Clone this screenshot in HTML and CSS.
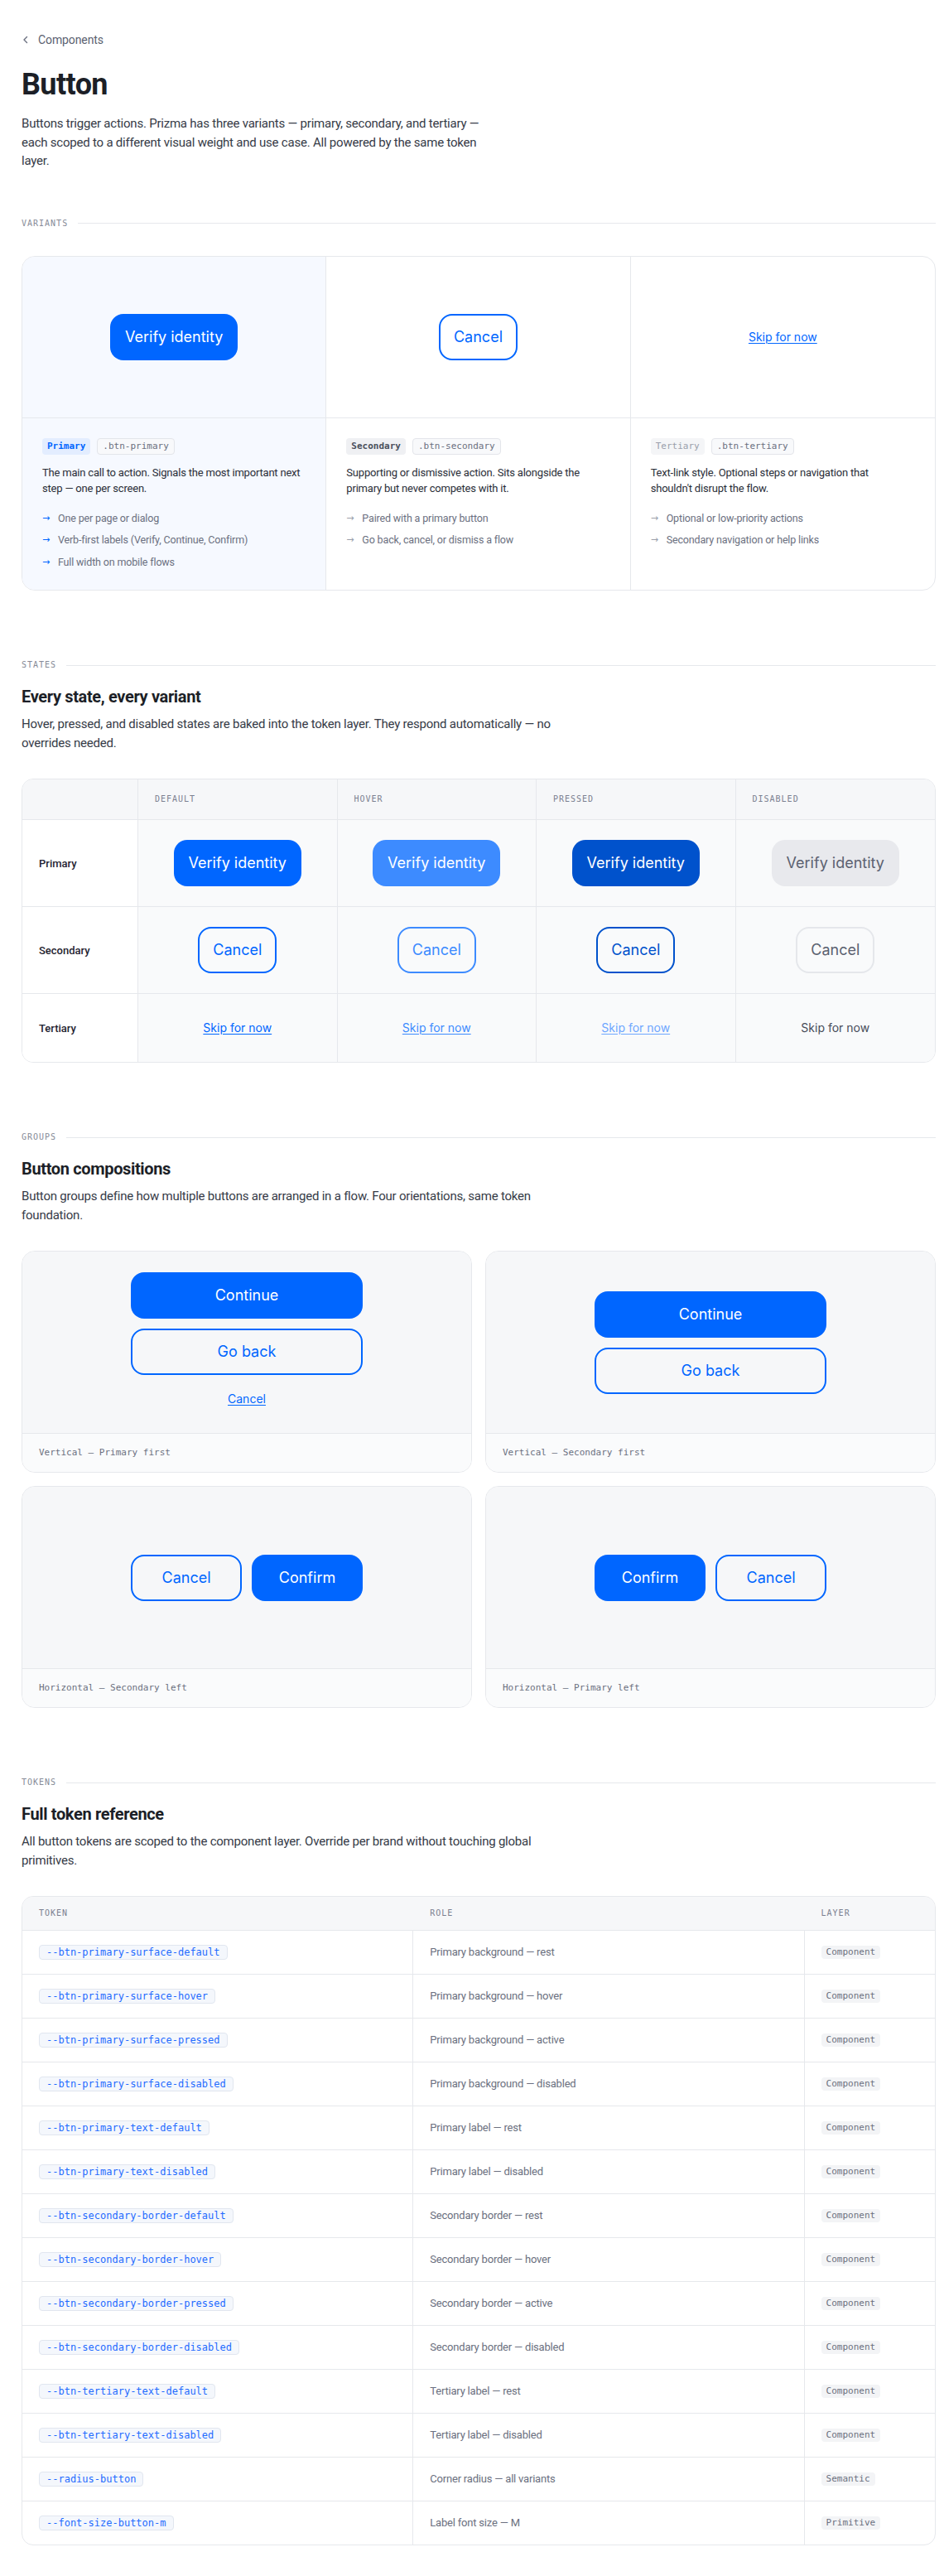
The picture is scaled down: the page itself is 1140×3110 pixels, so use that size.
FILE: index.html
```html
<!DOCTYPE html>
<html lang="en">
<head>
<meta charset="utf-8">
<title>Button — Components</title>
<link rel="stylesheet" href="styles.css">
</head>
<body>
<div class="page">
  <a class="crumb" href="#">
    <svg class="chev" width="10" height="10" viewBox="0 0 10 10"><path d="M6.5 1.5 3 5l3.5 3.5" fill="none" stroke="currentColor" stroke-width="1.4" stroke-linecap="round" stroke-linejoin="round"/></svg>
    <span>Components</span>
  </a>
  <h1 class="title">Button</h1>
  <p class="intro">Buttons trigger actions. Prizma has three variants — primary, secondary, and tertiary —<br>each scoped to a different visual weight and use case. All powered by the same token<br>layer.</p>

  <section class="section first">
    <div class="sec-label">Variants</div>
    <div class="vcard">
      <div class="vcol primary">
        <div class="vprev"><span class="btn btn-primary">Verify identity</span></div>
        <div class="vinfo">
          <div class="tags"><span class="tag t-primary">Primary</span><span class="tag cls">.btn-primary</span></div>
          <p class="vdesc">The main call to action. Signals the most important next<br>step — one per screen.</p>
          <ul class="vlist">
            <li><span class="arr blue">→</span>One per page or dialog</li>
            <li><span class="arr blue">→</span>Verb-first labels (Verify, Continue, Confirm)</li>
            <li><span class="arr blue">→</span>Full width on mobile flows</li>
          </ul>
        </div>
      </div>
      <div class="vcol">
        <div class="vprev"><span class="btn btn-secondary">Cancel</span></div>
        <div class="vinfo">
          <div class="tags"><span class="tag t-secondary">Secondary</span><span class="tag cls">.btn-secondary</span></div>
          <p class="vdesc">Supporting or dismissive action. Sits alongside the<br>primary but never competes with it.</p>
          <ul class="vlist">
            <li><span class="arr">→</span>Paired with a primary button</li>
            <li><span class="arr">→</span>Go back, cancel, or dismiss a flow</li>
          </ul>
        </div>
      </div>
      <div class="vcol">
        <div class="vprev"><span class="link">Skip for now</span></div>
        <div class="vinfo">
          <div class="tags"><span class="tag t-tertiary">Tertiary</span><span class="tag cls">.btn-tertiary</span></div>
          <p class="vdesc">Text-link style. Optional steps or navigation that<br>shouldn't disrupt the flow.</p>
          <ul class="vlist">
            <li><span class="arr">→</span>Optional or low-priority actions</li>
            <li><span class="arr">→</span>Secondary navigation or help links</li>
          </ul>
        </div>
      </div>
    </div>
  </section>

  <section class="section">
    <div class="sec-label">States</div>
    <h2 class="sec-title">Every state, every variant</h2>
    <p class="sec-desc">Hover, pressed, and disabled states are baked into the token layer. They respond automatically — no<br>overrides needed.</p>
    <div class="stable">
      <div class="sh"></div>
      <div class="sh">Default</div>
      <div class="sh">Hover</div>
      <div class="sh">Pressed</div>
      <div class="sh">Disabled</div>

      <div class="sl">Primary</div>
      <div class="sc"><span class="btn btn-primary">Verify identity</span></div>
      <div class="sc"><span class="btn btn-primary hover">Verify identity</span></div>
      <div class="sc"><span class="btn btn-primary pressed">Verify identity</span></div>
      <div class="sc"><span class="btn btn-primary disabled">Verify identity</span></div>

      <div class="sl">Secondary</div>
      <div class="sc"><span class="btn btn-secondary">Cancel</span></div>
      <div class="sc"><span class="btn btn-secondary hover">Cancel</span></div>
      <div class="sc"><span class="btn btn-secondary pressed">Cancel</span></div>
      <div class="sc"><span class="btn btn-secondary disabled">Cancel</span></div>

      <div class="sl last">Tertiary</div>
      <div class="sc last"><span class="link">Skip for now</span></div>
      <div class="sc last"><span class="link hover">Skip for now</span></div>
      <div class="sc last"><span class="link pressed">Skip for now</span></div>
      <div class="sc last"><span class="link disabled">Skip for now</span></div>
    </div>
  </section>

  <section class="section">
    <div class="sec-label">Groups</div>
    <h2 class="sec-title">Button compositions</h2>
    <p class="sec-desc">Button groups define how multiple buttons are arranged in a flow. Four orientations, same token<br>foundation.</p>
    <div class="ggrid">
      <div class="gcard">
        <div class="gprev">
          <div class="stack">
            <span class="btn btn-primary">Continue</span>
            <span class="btn btn-secondary">Go back</span>
            <span class="link">Cancel</span>
          </div>
        </div>
        <div class="gfoot">Vertical — Primary first</div>
      </div>
      <div class="gcard">
        <div class="gprev">
          <div class="stack">
            <span class="btn btn-primary">Continue</span>
            <span class="btn btn-secondary">Go back</span>
          </div>
        </div>
        <div class="gfoot">Vertical — Secondary first</div>
      </div>
      <div class="gcard">
        <div class="gprev">
          <div class="row">
            <span class="btn btn-secondary">Cancel</span>
            <span class="btn btn-primary">Confirm</span>
          </div>
        </div>
        <div class="gfoot">Horizontal — Secondary left</div>
      </div>
      <div class="gcard">
        <div class="gprev">
          <div class="row">
            <span class="btn btn-primary">Confirm</span>
            <span class="btn btn-secondary">Cancel</span>
          </div>
        </div>
        <div class="gfoot">Horizontal — Primary left</div>
      </div>
    </div>
  </section>

  <section class="section">
    <div class="sec-label">Tokens</div>
    <h2 class="sec-title">Full token reference</h2>
    <p class="sec-desc">All button tokens are scoped to the component layer. Override per brand without touching global<br>primitives.</p>
    <div class="ttable">
      <div class="th">Token</div><div class="th">Role</div><div class="th">Layer</div>

      <div class="td"><code class="tok">--btn-primary-surface-default</code></div><div class="td role">Primary background — rest</div><div class="td layer"><span class="lay">Component</span></div>
      <div class="td"><code class="tok">--btn-primary-surface-hover</code></div><div class="td role">Primary background — hover</div><div class="td layer"><span class="lay">Component</span></div>
      <div class="td"><code class="tok">--btn-primary-surface-pressed</code></div><div class="td role">Primary background — active</div><div class="td layer"><span class="lay">Component</span></div>
      <div class="td"><code class="tok">--btn-primary-surface-disabled</code></div><div class="td role">Primary background — disabled</div><div class="td layer"><span class="lay">Component</span></div>
      <div class="td"><code class="tok">--btn-primary-text-default</code></div><div class="td role">Primary label — rest</div><div class="td layer"><span class="lay">Component</span></div>
      <div class="td"><code class="tok">--btn-primary-text-disabled</code></div><div class="td role">Primary label — disabled</div><div class="td layer"><span class="lay">Component</span></div>
      <div class="td"><code class="tok">--btn-secondary-border-default</code></div><div class="td role">Secondary border — rest</div><div class="td layer"><span class="lay">Component</span></div>
      <div class="td"><code class="tok">--btn-secondary-border-hover</code></div><div class="td role">Secondary border — hover</div><div class="td layer"><span class="lay">Component</span></div>
      <div class="td"><code class="tok">--btn-secondary-border-pressed</code></div><div class="td role">Secondary border — active</div><div class="td layer"><span class="lay">Component</span></div>
      <div class="td"><code class="tok">--btn-secondary-border-disabled</code></div><div class="td role">Secondary border — disabled</div><div class="td layer"><span class="lay">Component</span></div>
      <div class="td"><code class="tok">--btn-tertiary-text-default</code></div><div class="td role">Tertiary label — rest</div><div class="td layer"><span class="lay">Component</span></div>
      <div class="td"><code class="tok">--btn-tertiary-text-disabled</code></div><div class="td role">Tertiary label — disabled</div><div class="td layer"><span class="lay">Component</span></div>
      <div class="td"><code class="tok">--radius-button</code></div><div class="td role">Corner radius — all variants</div><div class="td layer"><span class="lay">Semantic</span></div>
      <div class="td last"><code class="tok">--font-size-button-m</code></div><div class="td role last">Label font size — M</div><div class="td layer last"><span class="lay">Primitive</span></div>
    </div>
  </section>
</div>
</body>
</html>
```

FILE: styles.css
```css
* { box-sizing: border-box; margin: 0; padding: 0; }

body {
  margin: 0;
  background: #ffffff;
  font-family: Roboto, "Noto Sans", sans-serif;
  color: #1c1f27;
}

.page {
  width: 1130px;
  padding: 38px 0 40px 26px;
}

/* Header */
.crumb {
  display: flex;
  align-items: center;
  gap: 10px;
  font-size: 14px;
  line-height: 20px;
  color: #5b6170;
  text-decoration: none;
  letter-spacing: -0.1px;
}
.chev { color: #6b7080; flex: none; }

.title {
  margin: 22px 0 14px;
  font-size: 36px;
  line-height: 44px;
  font-weight: 700;
  letter-spacing: -0.6px;
  color: #1c1f27;
}

.intro {
  max-width: 640px;
  font-size: 15px;
  line-height: 22.5px;
  color: #363b47;
  letter-spacing: -0.22px;
}

/* Sections */
.section { margin-top: 82px; }
.section.first { margin-top: 56px; }

.sec-label {
  display: flex;
  align-items: center;
  gap: 12px;
  margin-bottom: 16px;
  font-family: "DejaVu Sans Mono", "Liberation Mono", monospace;
  font-size: 10px;
  line-height: 16px;
  letter-spacing: 1px;
  text-transform: uppercase;
  color: #868b97;
}
.sec-label::after {
  content: "";
  flex: 1;
  height: 1px;
  background: #e6e8ec;
}

.sec-title {
  font-size: 20px;
  line-height: 28px;
  font-weight: 700;
  letter-spacing: -0.35px;
  color: #1c1f27;
  margin-bottom: 8px;
}

.sec-desc {
  max-width: 760px;
  font-size: 15px;
  line-height: 22.5px;
  color: #363b47;
  letter-spacing: -0.22px;
  margin-bottom: 32px;
}

/* Buttons */
.btn {
  display: inline-flex;
  align-items: center;
  justify-content: center;
  height: 56px;
  padding: 0 16px;
  border: 2px solid transparent;
  border-radius: 16px;
  font-family: Inter, Roboto, sans-serif;
  font-size: 18px;
  line-height: 24px;
  font-weight: 400;
  white-space: nowrap;
}
.btn-primary { background: #0066ff; color: #ffffff; }
.btn-primary.hover { background: #3d8bff; }
.btn-primary.pressed { background: #0052cc; }
.btn-primary.disabled { background: #e8e9ed; color: #5b6170; }

.btn-secondary { background: transparent; border-color: #0066ff; color: #0066ff; }
.btn-secondary.hover { border-color: #3d8bff; color: #3d8bff; }
.btn-secondary.pressed { border-color: #0052cc; color: #0052cc; }
.btn-secondary.disabled { border-color: #e5e7eb; color: #5b6170; }

.link {
  display: inline-block;
  padding: 8px 0;
  font-family: Inter, Roboto, sans-serif;
  font-size: 14px;
  line-height: 18px;
  color: #0066ff;
  text-decoration: underline;
  text-underline-offset: 2px;
  text-decoration-thickness: 1px;
  white-space: nowrap;
}
.link.hover { color: #3d8bff; }
.link.pressed { color: #6ea6ff; }
.link.disabled { color: #474c59; text-decoration: none; }

/* Variants card */
.vcard {
  margin-top: 31px;
  display: grid;
  grid-template-columns: repeat(3, 1fr);
  border: 1px solid #e6e8ec;
  border-radius: 16px;
  overflow: hidden;
}
.vcol {
  display: flex;
  flex-direction: column;
  border-right: 1px solid #e6e8ec;
}
.vcol:last-child { border-right: none; }
.vcol.primary { background: #f6f9ff; }

.vprev {
  height: 195px;
  display: flex;
  align-items: center;
  justify-content: center;
  border-bottom: 1px solid #e6e8ec;
}
.vinfo { padding: 24px; flex: 1; }

.tags { display: flex; gap: 8px; }
.tag {
  font-family: "DejaVu Sans Mono", "Liberation Mono", monospace;
  font-size: 11px;
  line-height: 20px;
  padding: 0 6px;
  border-radius: 4px;
}
.t-primary { background: #e3edff; color: #0066ff; font-weight: 700; }
.t-secondary { background: #eff0f3; color: #4a4f5c; font-weight: 700; }
.t-tertiary { background: #f4f5f7; color: #9a9fab; }
.tag.cls {
  background: #f8f9fb;
  border: 1px solid #e3e5ea;
  line-height: 18px;
  color: #6b7080;
}

.vdesc {
  margin-top: 12px;
  font-size: 13px;
  line-height: 19.5px;
  color: #2a2e38;
  letter-spacing: -0.2px;
}
.vlist {
  list-style: none;
  margin-top: 16px;
  display: flex;
  flex-direction: column;
  gap: 7px;
}
.vlist li {
  display: flex;
  gap: 8px;
  font-size: 12.5px;
  line-height: 19.5px;
  color: #6b7080;
  letter-spacing: -0.15px;
}
.arr {
  width: 11px;
  flex: none;
  font-family: "DejaVu Sans", sans-serif;
  font-size: 11px;
  color: #9a9fab;
}
.arr.blue { color: #0066ff; }

/* States table */
.stable {
  display: grid;
  grid-template-columns: 140px repeat(4, 1fr);
  border: 1px solid #e6e8ec;
  border-radius: 14px;
  overflow: hidden;
}
.stable > div {
  border-right: 1px solid #e6e8ec;
  border-bottom: 1px solid #e6e8ec;
}
.stable > div:nth-child(5n) { border-right: none; }
.stable > div.last { border-bottom: none; }

.sh {
  background: #f6f7f9;
  padding: 16px 20px;
  font-family: "DejaVu Sans Mono", "Liberation Mono", monospace;
  font-size: 10px;
  line-height: 16px;
  letter-spacing: 1px;
  text-transform: uppercase;
  color: #7b8090;
}
.sl {
  background: #ffffff;
  display: flex;
  align-items: center;
  padding: 0 20px;
  font-size: 13px;
  font-weight: 500;
  color: #1f2330;
}
.sc {
  background: #f9fafb;
  display: flex;
  align-items: center;
  justify-content: center;
  padding: 24px;
}

/* Groups */
.ggrid {
  display: grid;
  grid-template-columns: 1fr 1fr;
  gap: 16px;
}
.gcard {
  display: flex;
  flex-direction: column;
  border: 1px solid #e6e8ec;
  border-radius: 16px;
  overflow: hidden;
}
.gprev {
  min-height: 219px;
  background: #f6f7f9;
  display: flex;
  align-items: center;
  justify-content: center;
  padding: 24px;
}
.gfoot {
  border-top: 1px solid #e6e8ec;
  background: #fafbfc;
  padding: 15px 20px;
  font-family: "DejaVu Sans Mono", "Liberation Mono", monospace;
  font-size: 11px;
  line-height: 16px;
  color: #6b7080;
}
.stack {
  width: 280px;
  display: flex;
  flex-direction: column;
  gap: 12px;
}
.stack .link { align-self: center; }
.row {
  width: 280px;
  display: flex;
  gap: 12px;
}
.row .btn { flex: 1; }

/* Tokens table */
.ttable {
  display: grid;
  grid-template-columns: 3fr 3fr 1fr;
  border: 1px solid #e6e8ec;
  border-radius: 14px;
  overflow: hidden;
}
.th {
  background: #f6f7f9;
  padding: 12px 20px;
  border-bottom: 1px solid #e6e8ec;
  font-family: "DejaVu Sans Mono", "Liberation Mono", monospace;
  font-size: 10px;
  line-height: 16px;
  letter-spacing: 1px;
  text-transform: uppercase;
  color: #7b8090;
}
.td {
  display: flex;
  align-items: center;
  padding: 17px 20px;
  border-bottom: 1px solid #e6e8ec;
  border-right: 1px solid #e6e8ec;
}
.td.layer { border-right: none; }
.td.last { border-bottom: none; }

.tok {
  font-family: "DejaVu Sans Mono", "Liberation Mono", monospace;
  font-size: 12px;
  line-height: 16px;
  padding: 0 8px;
  border: 1px solid #e1e6ef;
  background: #f4f7fc;
  color: #1f6bff;
  border-radius: 4px;
}
.role {
  font-size: 13px;
  line-height: 18px;
  color: #6b7080;
  letter-spacing: -0.2px;
}
.lay {
  font-family: "DejaVu Sans Mono", "Liberation Mono", monospace;
  font-size: 11px;
  line-height: 16px;
  padding: 0 6px;
  background: #f3f4f6;
  color: #6b7080;
  border-radius: 4px;
}
```
